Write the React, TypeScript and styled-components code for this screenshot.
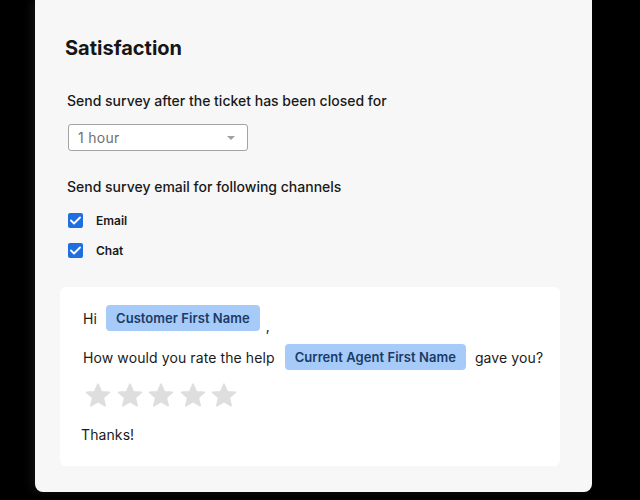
import React from "react";
import styled, { createGlobalStyle } from "styled-components";

const Global = createGlobalStyle`
  html, body { margin: 0; padding: 0; background: #000; }
  body { font-family: Inter, "Noto Sans", sans-serif; width: 640px; height: 500px; overflow: hidden; }
  * { box-sizing: border-box; }
`;

const Card = styled.div`
  margin-left: 35px;
  width: 557px;
  height: 492px;
  background: #f7f7f7;
  border-radius: 0 0 8px 8px;
  padding: 36px 32px 0 32px;
  display: flex;
  flex-direction: column;
  align-items: flex-start;
  box-shadow: -4px 0 10px rgba(40, 40, 40, 0.4);
`;

const Title = styled.h1`
  margin: 0 0 0 -2px;
  font-size: 20px;
  line-height: 24px;
  font-weight: 700;
  color: #161616;
`;

const Label = styled.div<{ $mt: number }>`
  margin-top: ${(p) => p.$mt}px;
  font-size: 14px;
  line-height: 20px;
  font-weight: 500;
  color: #1a1a1a;
`;

const Select = styled.div`
  margin-top: 13px;
  margin-left: 1px;
  width: 180px;
  height: 27px;
  border: 1px solid #a3a3a3;
  border-radius: 3px;
  background: #fff;
  display: flex;
  align-items: center;
  justify-content: space-between;
  padding: 0 12px 0 9px;
  font-size: 14px;
  letter-spacing: 0.3px;
  color: #707070;
`;

const Caret = styled.span`
  width: 0;
  height: 0;
  border-left: 4px solid transparent;
  border-right: 4px solid transparent;
  border-top: 4px solid #a0a0a0;
`;

const Checks = styled.div`
  margin-top: 13px;
  display: flex;
  flex-direction: column;
  gap: 10px;
`;

const CheckRow = styled.label`
  display: flex;
  align-items: center;
  gap: 13px;
  height: 20px;
  margin-left: 1px;
  font-size: 12px;
  font-weight: 600;
  color: #1a1a1a;
`;

const Box = styled.span`
  width: 15px;
  height: 15px;
  border-radius: 2px;
  background: #1f6fe0;
  display: flex;
  align-items: center;
  justify-content: center;
`;

const Panel = styled.div`
  margin-top: 27px;
  margin-left: -7px;
  width: 500px;
  height: 179px;
  background: #fff;
  border-radius: 6px;
  padding: 18px 0 0 23px;
  display: flex;
  flex-direction: column;
  gap: 13px;
  font-size: 14px;
  letter-spacing: 0.1px;
  color: #1a1a1a;
`;

const Line = styled.div`
  display: flex;
  align-items: center;
  height: 26px;
`;

const Chip = styled.span<{ $ml: number; $mr: number }>`
  margin-left: ${(p) => p.$ml}px;
  margin-right: ${(p) => p.$mr}px;
  height: 26px;
  padding: 0 10px;
  border-radius: 4px;
  background: #a6cbf8;
  color: #1b3a66;
  font-size: 13px;
  font-weight: 600;
  letter-spacing: 0.05px;
  display: flex;
  align-items: center;
`;

const Comma = styled.span`
  align-self: flex-end;
  line-height: 14px;
  margin-bottom: -2px;
`;

const Stars = styled.div`
  display: flex;
  gap: 5.5px;
  margin-left: 2px;
  height: 25px;
  align-items: center;
`;

const Thanks = styled.div`
  margin-top: 4px;
  margin-left: -2px;
  line-height: 20px;
`;

const Check = () => (
  <svg width="11" height="9" viewBox="0 0 11 9">
    <path d="M1 4.5 L4 7.5 L10 1.5" fill="none" stroke="#fff" strokeWidth="1.8" strokeLinecap="round" strokeLinejoin="round" />
  </svg>
);

const Star = () => (
  <svg width="26" height="25" viewBox="0 0 24 23">
    <path
      d="M12 1 L15.1 8 L22.5 8.6 L16.9 13.5 L18.6 21 L12 17 L5.4 21 L7.1 13.5 L1.5 8.6 L8.9 8 Z"
      fill="#dedede"
      stroke="#dedede"
      strokeWidth="1.5"
      strokeLinejoin="round"
    />
  </svg>
);

export default function App() {
  return (
    <>
      <Global />
      <Card>
        <Title>Satisfaction</Title>
        <Label $mt={31}>Send survey after the ticket has been closed for</Label>
        <Select>
          <span>1 hour</span>
          <Caret />
        </Select>
        <Label $mt={26}>Send survey email for following channels</Label>
        <Checks>
          <CheckRow>
            <Box><Check /></Box>
            Email
          </CheckRow>
          <CheckRow>
            <Box><Check /></Box>
            Chat
          </CheckRow>
        </Checks>
        <Panel>
          <Line>
            Hi
            <Chip $ml={9} $mr={6}>Customer First Name</Chip>
            <Comma>,</Comma>
          </Line>
          <Line>
            How would you rate the help
            <Chip $ml={10} $mr={9}>Current Agent First Name</Chip>
            gave you?
          </Line>
          <Stars>
            <Star />
            <Star />
            <Star />
            <Star />
            <Star />
          </Stars>
          <Thanks>Thanks!</Thanks>
        </Panel>
      </Card>
    </>
  );
}
